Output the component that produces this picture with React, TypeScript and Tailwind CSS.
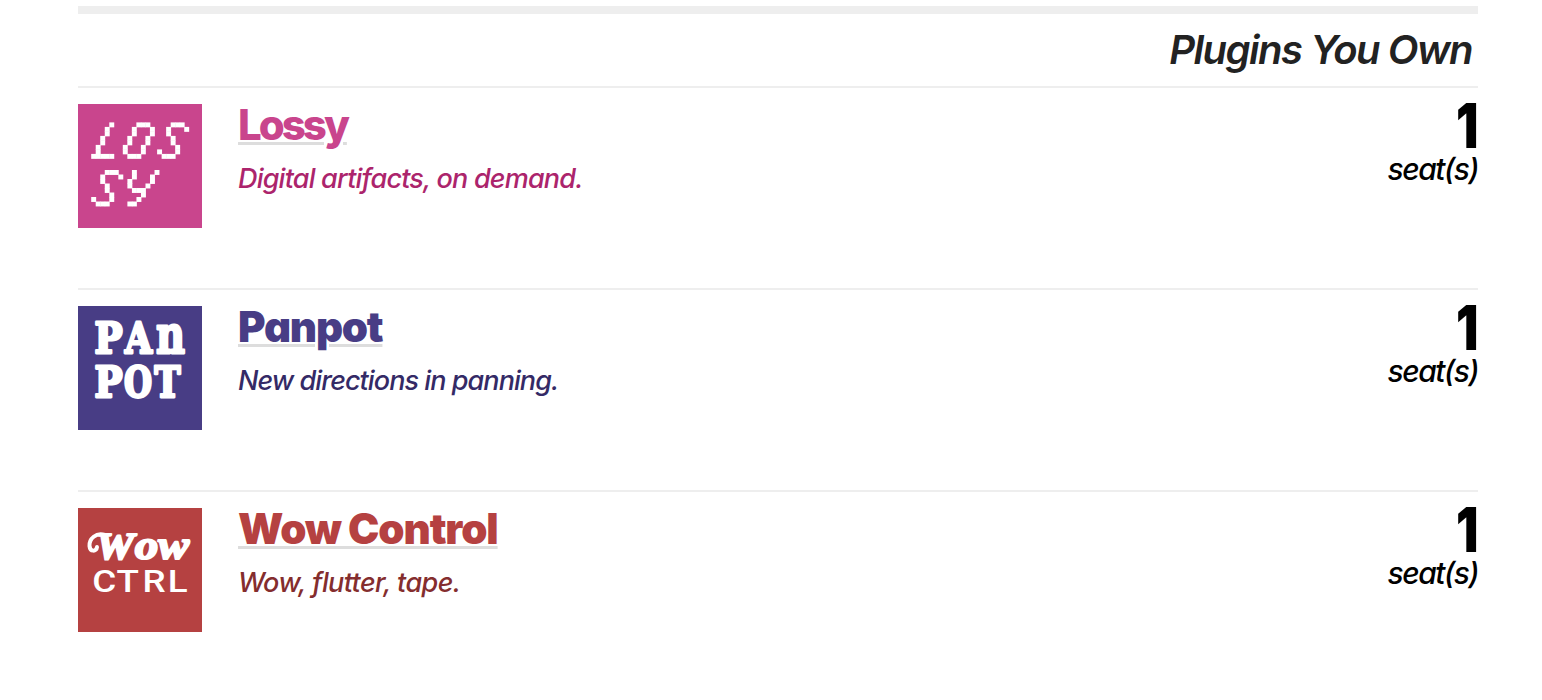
import React from 'react';

// Pixel rows for the Lossy logo letters
const L = ['....#', '...#.', '...#.', '..#..', '..#..', '.#...', '.#...', '#####'];
const O = ['...###.', '..#...#', '..#...#', '.#...#.', '.#...#.', '#...#..', '#...#..', '.###...'];
const S = ['...###.', '..#...#', '..#....', '...#...', '...#...', '....#..', '#...#..', '.###...'];
const Y = ['.#....#', '.#...#.', '#....#.', '#...#..', '.###...', '...#...', '..#....', '##.....'];

const PixelLetter = ({ rows, x, y }: any) => (
  <g transform={`translate(${x} ${y})`}>
    {rows.map((row: string, r: number) =>
      row.split('').map((cell, c) =>
        cell === '#' ? <rect key={`${r}-${c}`} x={c * 4.52 - 0.2} y={r * 4.5 - 0.2} width={4.95} height={4.95} /> : null
      )
    )}
  </g>
);

const LossyLogo = () => (
  <svg viewBox="0 0 124 124" className="w-[124px] h-[124px] bg-[#c9458d]" fill="#fff">
    <PixelLetter rows={L} x={13.4} y={18.6} />
    <PixelLetter rows={O} x={45} y={18.6} />
    <PixelLetter rows={S} x={79.3} y={18.6} />
    <PixelLetter rows={S} x={13.4} y={66.2} />
    <PixelLetter rows={Y} x={49.6} y={66.2} />
  </svg>
);

const PanpotLogo = () => (
  <svg
    viewBox="0 0 124 124"
    className="w-[124px] h-[124px] bg-[#483d85] font-['DejaVu_Serif'] font-bold"
    fill="#fff"
    stroke="#fff"
    strokeWidth="2.8"
    strokeLinejoin="round"
    fontSize="42"
  >
    <text x="16.5" y="47" textLength="28" lengthAdjust="spacingAndGlyphs">P</text>
    <text x="47" y="47" textLength="27" lengthAdjust="spacingAndGlyphs">A</text>
    <text x="78" y="47" textLength="29" lengthAdjust="spacingAndGlyphs" fontSize="53">n</text>
    <text x="16.5" y="90.5" textLength="28" lengthAdjust="spacingAndGlyphs">P</text>
    <text x="46" y="90.5" textLength="28" lengthAdjust="spacingAndGlyphs">O</text>
    <text x="76.5" y="90.5" textLength="26" lengthAdjust="spacingAndGlyphs">T</text>
  </svg>
);

const WowLogo = () => (
  <svg viewBox="0 0 124 124" className="w-[124px] h-[124px] bg-[#b54141]" fill="#fff">
    <g className="font-['Liberation_Serif'] font-bold italic" stroke="#fff" strokeWidth="2.2" strokeLinejoin="round">
      <text x="18" y="51" fontSize="37" textLength="38" lengthAdjust="spacingAndGlyphs">W</text>
      <text x="57" y="51" fontSize="41" textLength="54" lengthAdjust="spacingAndGlyphs">ow</text>
    </g>
    <path d="M27 27C18 24 11 31 11.5 38c.5 6 7 6 7.500 1" fill="none" stroke="#fff" strokeWidth="4" strokeLinecap="round" />
    <text
      transform="scale(1.15 1)"
      x="12.500 33.500 56 78"
      y="84"
      fontSize="32"
      className="font-['Roboto'] font-medium"
    >
      CTRL
    </text>
  </svg>
);

const plugins = [
  {
    name: 'Lossy',
    tagline: 'Digital artifacts, on demand.',
    seats: 1,
    logo: <LossyLogo />,
    nameClass: 'font-extrabold text-[#c9458d] tracking-[-3px]',
    taglineClass: 'text-[#ac246c] tracking-[-0.8px]'
  },
  {
    name: 'Panpot',
    tagline: 'New directions in panning.',
    seats: 1,
    logo: <PanpotLogo />,
    nameClass: 'font-black text-[#483d85] tracking-[-1.2px]',
    taglineClass: 'text-[#342a66] tracking-[-0.93px]'
  },
  {
    name: 'Wow Control',
    tagline: 'Wow, flutter, tape.',
    seats: 1,
    logo: <WowLogo />,
    nameClass: 'font-black text-[#b54141] tracking-[-1.1px]',
    taglineClass: 'text-[#842d2e] tracking-[-0.6px]'
  }
];

const PluginRow = ({ plugin }: any) => (
  <li className="flex h-[202px] border-t-2 border-[#eeeeee] pt-4">
    <div className="shrink-0">{plugin.logo}</div>
    <div className="ml-9 flex-1">
      <h2 className="h-[52px] text-[42px] leading-[42px]">
        <a
          href="#"
          className={`underline decoration-[#dddddd] decoration-[3px] underline-offset-[2px] ${plugin.nameClass}`}
        >
          {plugin.name}
        </a>
      </h2>
      <p className={`mt-[5px] text-[27px] font-medium italic leading-9 ${plugin.taglineClass}`}>{plugin.tagline}</p>
    </div>
    <div className="text-right text-black">
      <div className="h-[46px] origin-right scale-x-80 text-[62px] font-black leading-[44px]">{plugin.seats}</div>
      <div className="text-[30px] font-medium italic leading-[38px] tracking-[-1.45px]">seat(s)</div>
    </div>
  </li>
);

export default function App() {
  return (
    <main className="ml-[78px] mt-1.5 h-[694px] w-[1400px] overflow-hidden bg-white font-['Inter',sans-serif] [font-feature-settings:'cv11']">
      <header className="h-20 border-t-8 border-[#eeeeee] pr-1.5 text-right">
        <h1 className="text-[40px] font-semibold italic leading-[72px] tracking-[-1.5px] text-[#222222]">
          Plugins You Own
        </h1>
      </header>
      <ul>
        {plugins.map((plugin) => (
          <PluginRow key={plugin.name} plugin={plugin} />
        ))}
      </ul>
    </main>
  );
}
